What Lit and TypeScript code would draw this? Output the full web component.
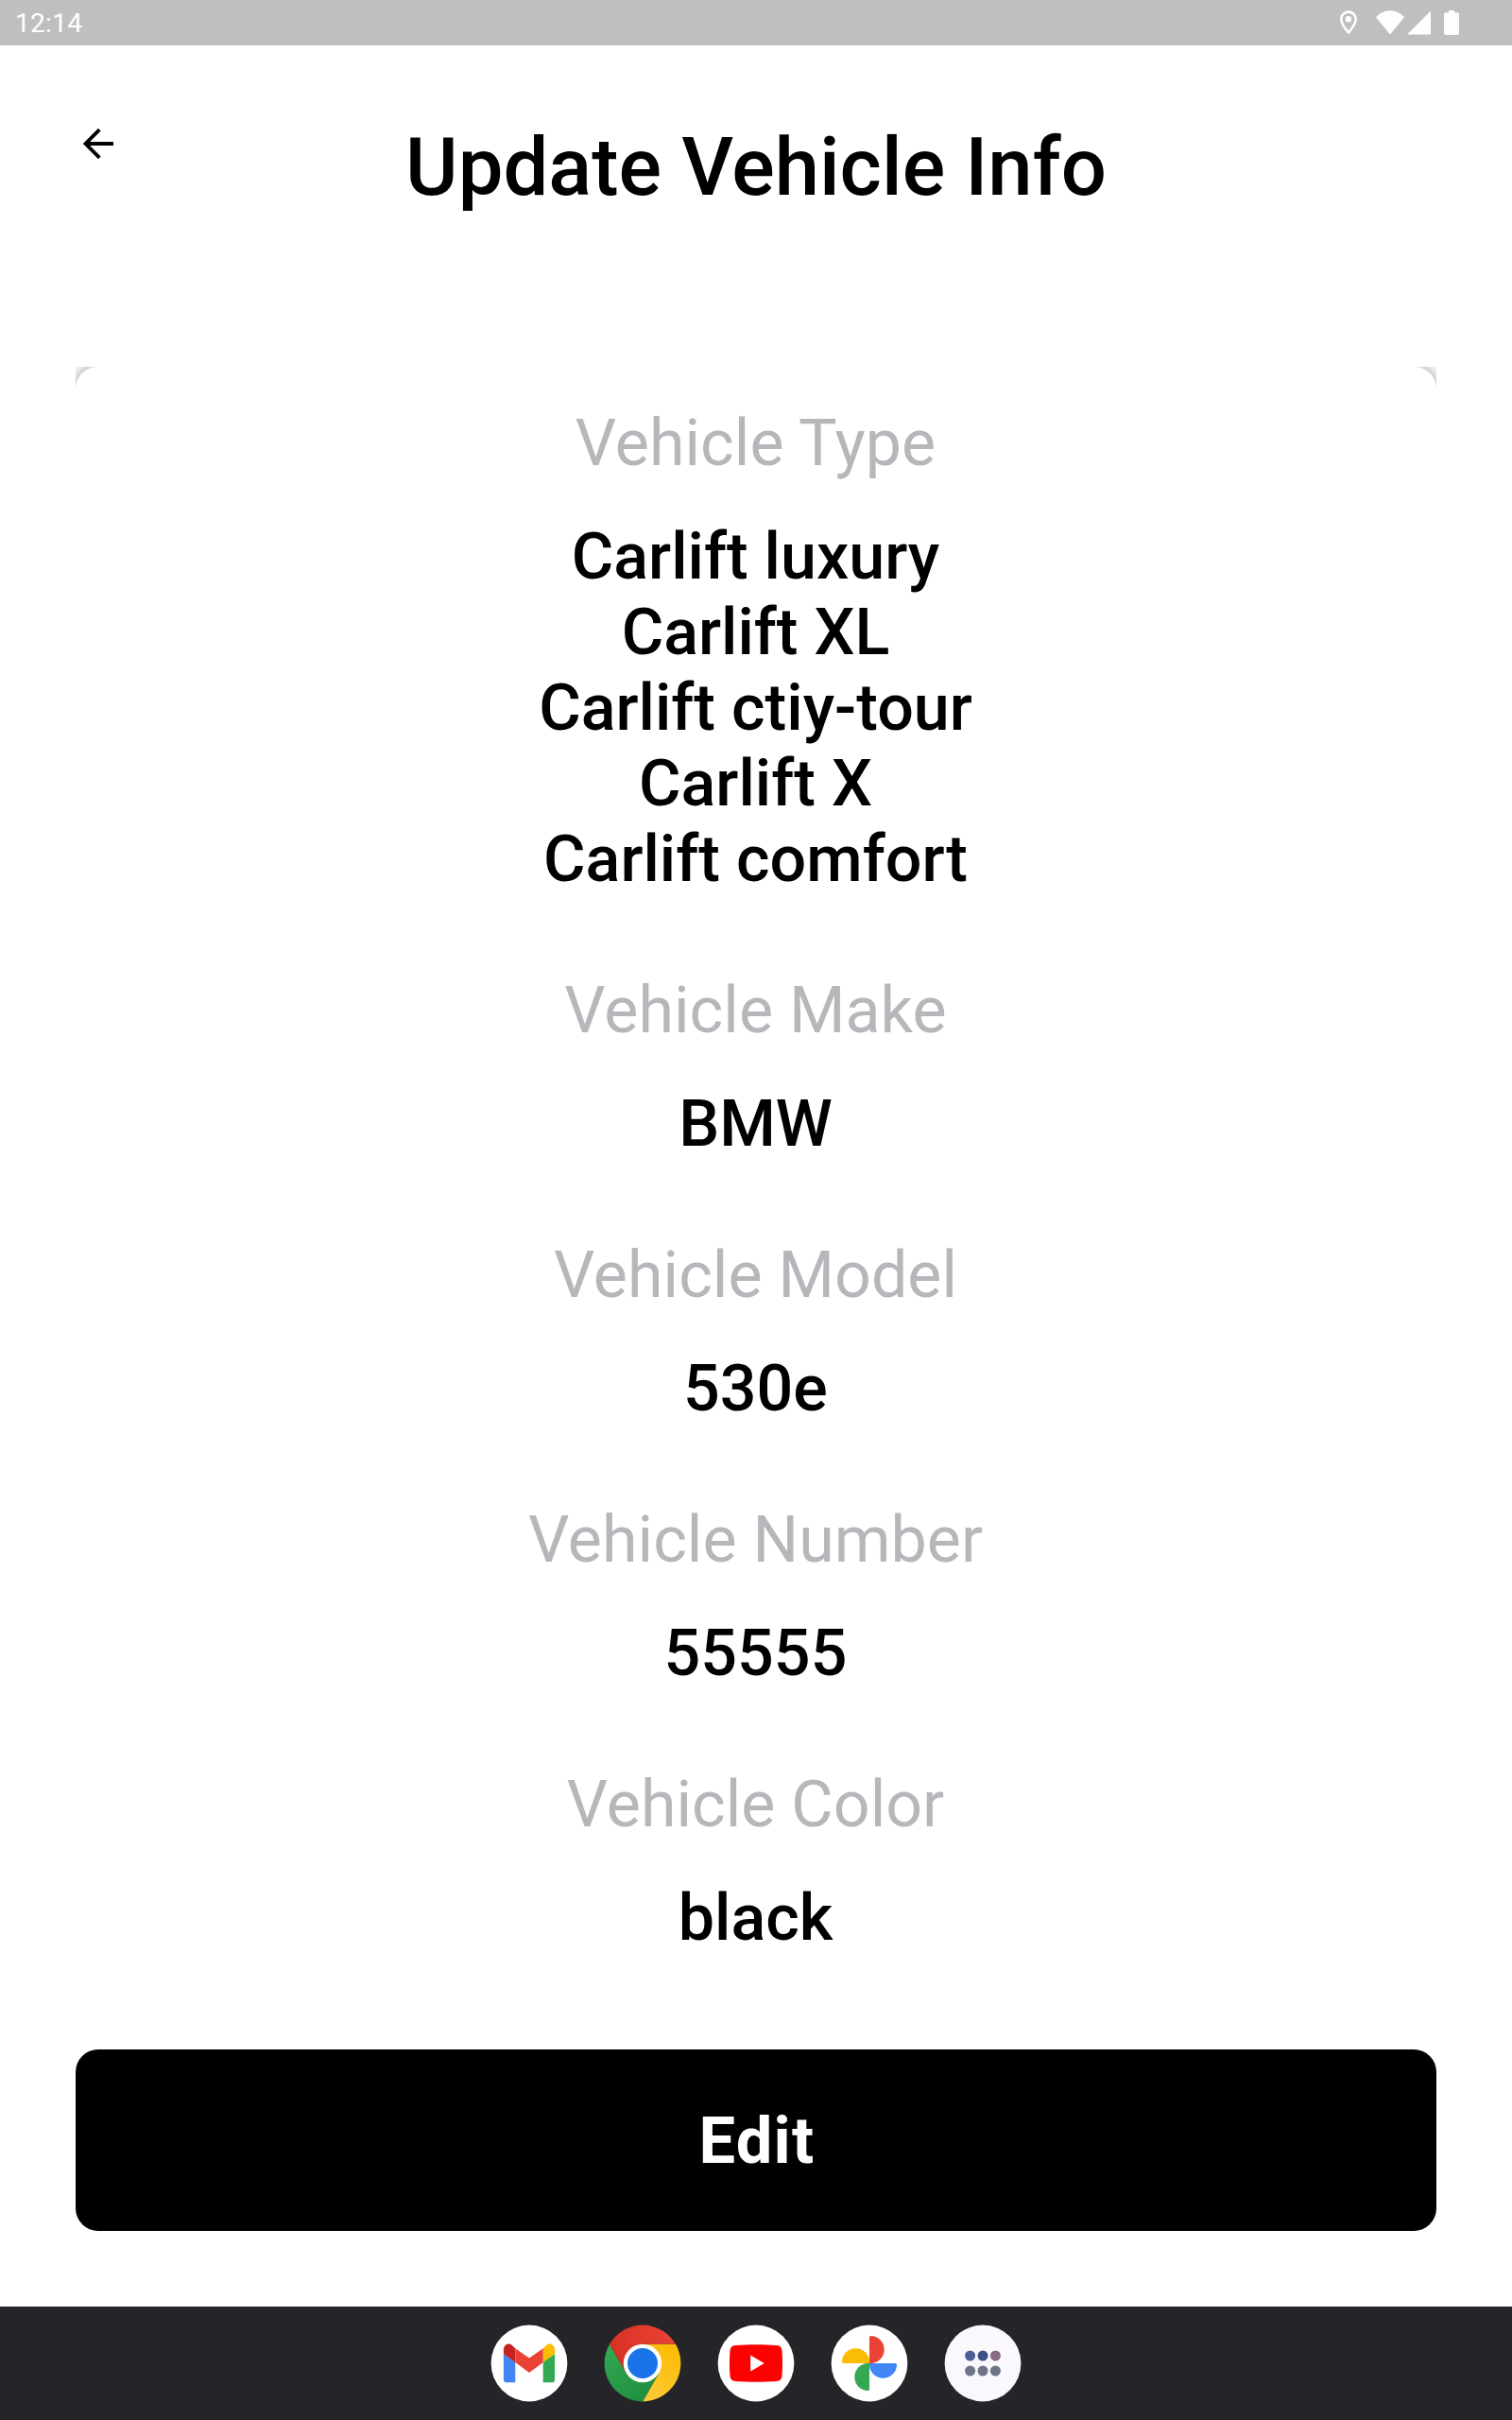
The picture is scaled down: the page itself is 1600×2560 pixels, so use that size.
import { LitElement, html, css, svg } from "lit";
import { customElement } from "lit/decorators.js";

interface Field {
  label: string;
  values: string[];
}

const FIELDS: Field[] = [
  {
    label: "Vehicle Type",
    values: ["Carlift luxury", "Carlift XL", "Carlift ctiy-tour", "Carlift X", "Carlift comfort"],
  },
  { label: "Vehicle Make", values: ["BMW"] },
  { label: "Vehicle Model", values: ["530e"] },
  { label: "Vehicle Number", values: ["55555"] },
  { label: "Vehicle Color", values: ["black"] },
];

@customElement("status-bar")
export class StatusBar extends LitElement {
  static styles = css`
    :host {
      display: flex;
      justify-content: space-between;
      height: 48px;
      background: #bfbfbf;
      color: #fff;
      font: 400 28px/50px Roboto, sans-serif;
    }
    .time {
      padding-left: 16px;
      letter-spacing: 0.3px;
    }
    .icons {
      display: block;
      width: 220px;
      height: 48px;
    }
  `;

  render() {
    return html`
      <span class="time">12:14</span>
      <svg class="icons" viewBox="0 0 220 48" fill="#fff">
        <path
          fill-rule="evenodd"
          d="M47 11.3c-5 0-9 4-9 9 0 6.500 9 16.200 9 16.200s9-9.700 9-16.200c0-5-4-9-9-9zm0 2.600c3.600 0 6.400 2.800 6.400 6.400 0 3.700-3.700 9.100-6.400 12.300-2.700-3.200-6.400-8.600-6.400-12.300 0-3.600 2.800-6.400 6.400-6.400z"
        />
        <circle cx="47" cy="20.200" r="3.200" />
        <path d="M91 36.500L76 18.200C80 14 85 11.300 91 11.300s11 2.700 15 6.900z" />
        <path d="M109 36.500L134 11.500V36.500z" />
        <path d="M153 11h6v2.300h3.200a1.800 1.800 0 0 1 1.800 1.800v20a1.800 1.800 0 0 1-1.800 1.800h-12.400a1.800 1.800 0 0 1-1.800-1.800v-20a1.800 1.800 0 0 1 1.800-1.800h3.200z" />
      </svg>
    `;
  }
}

@customElement("dock-bar")
export class DockBar extends LitElement {
  static styles = css`
    :host {
      display: flex;
      justify-content: center;
      align-items: center;
      gap: 38px;
      height: 120px;
      background: #252429;
    }
    .app {
      display: block;
      width: 82px;
      height: 82px;
    }
  `;

  private gmail = svg`
    <circle r="40.400" fill="#fff" />
    <path fill="#4285f4" d="M-14.700-1.500V20.300h-9a3.400 3.400 0 0 1-3.400-3.400V-10z" />
    <path fill="#34a853" d="M14.700-1.500V20.300h9a3.400 3.400 0 0 0 3.400-3.400V-10z" />
    <path fill="#fbbc04" d="M14.700-15.800l2.900-2.800c4-4 9.500-1 9.500 4.600V-10L14.700-1z" />
    <path fill="#c5221f" d="M-14.700-15.800l-2.900-2.800c-4-4-9.500-1-9.500 4.600V-10l12.400 9z" />
    <path fill="#ea4335" d="M-14.700-15.800L0-5.500 14.700-15.800V-1L0 10-14.700-1z" />
  `;

  private chrome = svg`
    <defs>
      <linearGradient id="red" x1="0" x2="1"><stop stop-color="#d93025" /><stop offset="1" stop-color="#ea4335" /></linearGradient>
      <linearGradient id="green" x1=".8" y1="1" x2=".1" y2="0"><stop stop-color="#1e8e3e" /><stop offset="1" stop-color="#34a853" /></linearGradient>
      <linearGradient id="yellow" x1=".3" y1="1" x2=".6" y2="0"><stop stop-color="#fcc934" /><stop offset="1" stop-color="#fbbc04" /></linearGradient>
    </defs>
    <path fill="url(#yellow)" d="M0-20.200H34.980A40.400 40.400 0 0 1 0 40.400L17.500 10.100z" />
    <path fill="url(#green)" d="M17.500 10.100L0 40.400A40.400 40.400 0 0 1-34.980-20.200L-17.500 10.100 0 15z" />
    <path fill="url(#red)" d="M0-20.200H34.980A40.400 40.400 0 0 0-34.980-20.200L-17.500 10.100z" />
    <circle r="20.200" fill="#fff" />
    <circle r="16" fill="#1a73e8" />
  `;

  private youtube = svg`
    <circle r="40.400" fill="#fff" />
    <path fill="#f00" d="M-22-19C-9-19.900 9-19.900 22-19c3.500.200 5 2.200 5.500 5.500.7 9 .7 18 0 27-.5 3.300-2 5.300-5.500 5.500-13 .9-31 .9-44 0-3.500-.2-5-2.200-5.500-5.500-.7-9-.7-18 0-27 .5-3.300 2-5.300 5.500-5.500z" />
    <path fill="#fff" d="M-5.800-8.500L8.800 0-5.800 8.500z" />
  `;

  private photos = svg`
    <circle r="40.400" fill="#fff" />
    <path fill="#ea4335" d="M0 0V-27.500A1.500 1.500 0 0 1 1.500-29C9.500-29 15.700-22.500 15.700-14.500S9.500 0 1.500 0z" />
    <path fill="#4285f4" d="M0 0H27.500A1.500 1.500 0 0 1 29 1.500C29 9.500 22.500 15.700 14.500 15.700S0 9.500 0 1.500z" />
    <path fill="#34a853" d="M0 0V27.500A1.500 1.500 0 0 1-1.500 29C-9.500 29-15.700 22.500-15.700 14.500S-9.500 0-1.500 0z" />
    <path fill="#fbbc04" d="M0 0H-27.500A1.500 1.500 0 0 1-29-1.500C-29-9.500-22.500-15.700-14.500-15.700S0-9.500 0-1.500z" />
  `;

  private drawer = svg`
    <circle r="40.400" fill="#faf8fd" />
    <circle cx="-13.400" cy="-8" r="5.500" fill="#4a5f94" />
    <circle cx="0" cy="-8" r="5.500" fill="#3c5086" />
    <circle cx="13.400" cy="-8" r="5.500" fill="#8b6a88" />
    <circle cx="-13.400" cy="8" r="5.500" fill="#6f7488" />
    <circle cx="0" cy="8" r="5.500" fill="#6f7488" />
    <circle cx="13.400" cy="8" r="5.500" fill="#6f7488" />
  `;

  render() {
    return [this.gmail, this.chrome, this.youtube, this.photos, this.drawer].map(
      (icon) => html`<svg class="app" viewBox="-41 -41 82 82">${icon}</svg>`,
    );
  }
}

@customElement("app-root")
export class AppRoot extends LitElement {
  static styles = css`
    :host {
      display: flex;
      flex-direction: column;
      height: 2560px;
      background: #fff;
      color: #000;
      font-family: Roboto, sans-serif;
    }
    .header {
      display: grid;
      grid-template-columns: 240px 1fr 240px;
      height: 340px;
      box-sizing: border-box;
      padding-top: 79px;
    }
    .back {
      display: block;
      width: 48px;
      height: 48px;
      margin: 1px 0 0 80px;
    }
    .title {
      margin: 0;
      text-align: center;
      font-size: 85px;
      line-height: 100px;
      font-weight: 500;
    }
    .viewport {
      height: 1780px;
      margin: 0 80px;
      overflow: hidden;
    }
    .card {
      box-sizing: border-box;
      height: 1840px;
      padding: 41px 1px 0 0;
      border-radius: 23px;
      background: #fff;
      box-shadow: 0 0 16px rgba(0, 0, 0, 0.45);
      text-align: center;
      font-size: 68.2px;
      line-height: 80px;
    }
    .field {
      padding-bottom: 80px;
    }
    .label {
      margin-bottom: 40px;
      color: #b7b6bb;
    }
    .value {
      font-weight: 500;
    }
    .edit {
      height: 192px;
      margin: 0 80px;
      padding: 2px 0 0 2px;
      border: 0;
      border-radius: 24px;
      background: #000;
      color: #fff;
      font: 700 68.6px/190px Roboto, sans-serif;
      letter-spacing: 1.3px;
    }
    .dock {
      margin-top: auto;
    }
  `;

  render() {
    return html`
      <status-bar></status-bar>
      <header class="header">
        <svg class="back" viewBox="0 0 48 48" fill="none" stroke="#000" stroke-width="3.800">
          <path d="M40 24H10M25.300 9.200L10.500 24l14.800 14.800" />
        </svg>
        <h1 class="title">Update Vehicle Info</h1>
      </header>
      <main class="viewport">
        <section class="card">
          ${FIELDS.map(
            (field) => html`
              <div class="field">
                <div class="label">${field.label}</div>
                ${field.values.map((value) => html`<div class="value">${value}</div>`)}
              </div>
            `,
          )}
        </section>
      </main>
      <button class="edit">Edit</button>
      <dock-bar class="dock"></dock-bar>
    `;
  }
}
